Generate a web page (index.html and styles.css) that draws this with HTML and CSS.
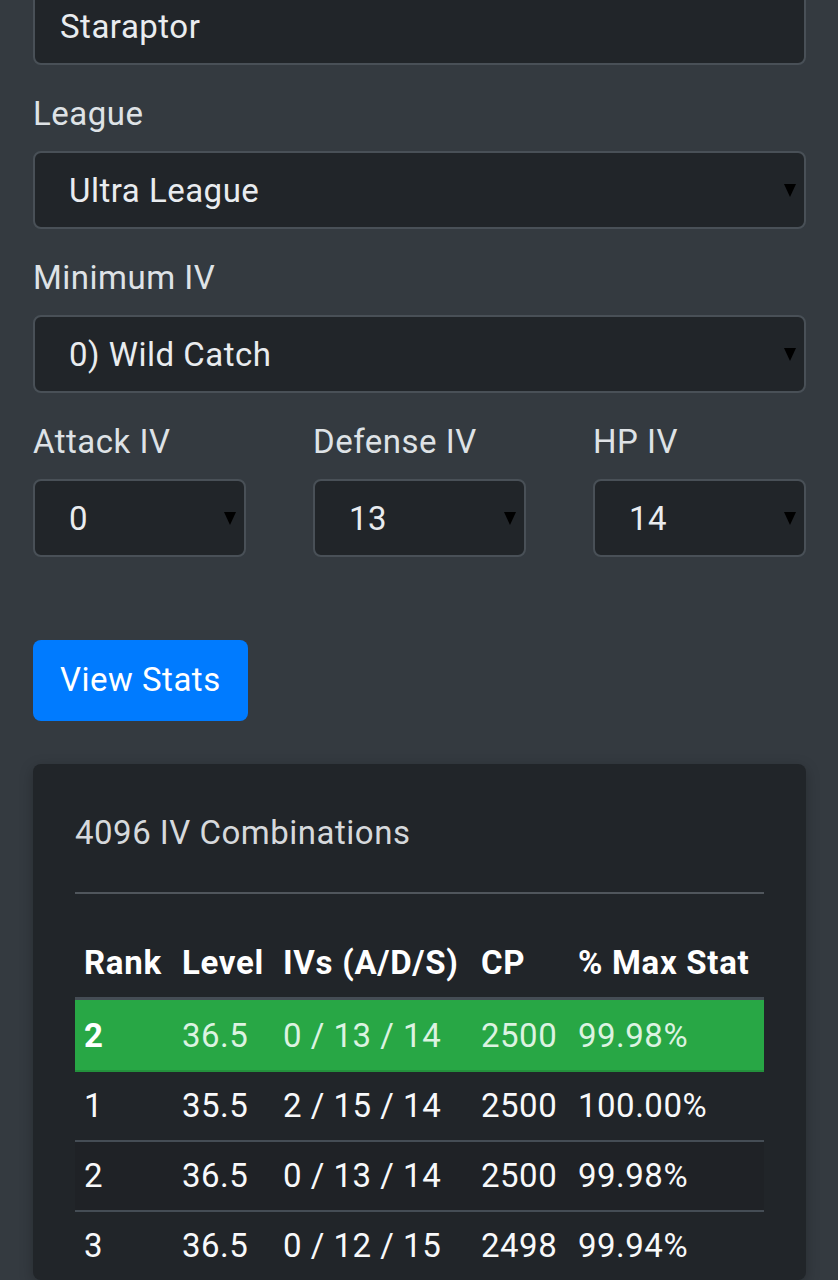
FILE: index.html
```html
<!DOCTYPE html>
<html lang="en">
<head>
  <meta charset="UTF-8">
  <title>IV Rank Checker</title>
  <link rel="stylesheet" href="styles.css">
</head>
<body>
  <div class="page">
    <form class="ivform" autocomplete="off">
      <div class="form-group">
        <input class="field name-input" name="pokemon" value="Staraptor">
      </div>

      <div class="form-group">
        <label for="league">League</label>
        <div class="select-wrap">
          <select id="league" class="field">
            <option>Great League</option>
            <option selected>Ultra League</option>
            <option>Master League</option>
          </select>
        </div>
      </div>

      <div class="form-group">
        <label for="minIv">Minimum IV</label>
        <div class="select-wrap">
          <select id="minIv" class="field">
            <option selected>0) Wild Catch</option>
            <option>1) Good Friend</option>
            <option>5) Weather Boost</option>
          </select>
        </div>
      </div>

      <div class="form-group iv-row">
        <div>
          <label for="atk">Attack IV</label>
          <div class="select-wrap">
            <select id="atk" class="field"><option selected>0</option><option>1</option></select>
          </div>
        </div>
        <div>
          <label for="def">Defense IV</label>
          <div class="select-wrap">
            <select id="def" class="field"><option selected>13</option><option>14</option></select>
          </div>
        </div>
        <div>
          <label for="hp">HP IV</label>
          <div class="select-wrap">
            <select id="hp" class="field"><option selected>14</option><option>15</option></select>
          </div>
        </div>
      </div>

      <button type="submit" class="btn">View Stats</button>
    </form>

    <div class="card">
      <h5 class="card-title">4096 IV Combinations</h5>
      <hr>
      <table class="ranks">
        <thead>
          <tr>
            <th class="c-rank">Rank</th>
            <th class="c-level">Level</th>
            <th class="c-ivs">IVs (A/D/S)</th>
            <th class="c-cp">CP</th>
            <th class="c-pct">% Max Stat</th>
          </tr>
        </thead>
        <tbody>
          <tr class="current">
            <th>2</th><td>36.5</td><td>0 / 13 / 14</td><td>2500</td><td>99.98%</td>
          </tr>
          <tr>
            <td>1</td><td>35.5</td><td>2 / 15 / 14</td><td>2500</td><td>100.00%</td>
          </tr>
          <tr>
            <td>2</td><td>36.5</td><td>0 / 13 / 14</td><td>2500</td><td>99.98%</td>
          </tr>
          <tr>
            <td>3</td><td>36.5</td><td>0 / 12 / 15</td><td>2498</td><td>99.94%</td>
          </tr>
        </tbody>
      </table>
    </div>
  </div>
</body>
</html>
```

FILE: styles.css
```css
body {
  margin: 0;
  background: #343a40;
  color: #dee2e6;
  font-family: Roboto, 'Noto Sans', sans-serif;
  font-size: 33px;
  letter-spacing: 0.5px;
  line-height: 48px;
  overflow: hidden;
}
.page {
  padding: 0 32px 40px 33px;
}
.ivform {
  margin-top: -13px;
}
.form-group {
  margin-bottom: 25px;
}
.form-group label {
  display: block;
  margin-bottom: 13px;
}
.field {
  display: block;
  width: 100%;
  height: 78px;
  box-sizing: border-box;
  background: #212529;
  border: 2px solid #495057;
  border-radius: 8px;
  color: #e9ecef;
  font-family: inherit;
  font-size: 33px;
  letter-spacing: 0.5px;
  outline: none;
}
.name-input {
  padding: 0 25px;
}
.select-wrap {
  position: relative;
}
.select-wrap select {
  appearance: none;
  -webkit-appearance: none;
  padding: 0 40px 0 34px;
}
.select-wrap::after {
  content: "";
  position: absolute;
  right: 10px;
  top: 50%;
  margin-top: -6px;
  border-left: 6px solid transparent;
  border-right: 6px solid transparent;
  border-top: 13px solid #000;
  pointer-events: none;
}
.iv-row {
  display: grid;
  grid-template-columns: repeat(3, 1fr);
  column-gap: 67px;
}
.btn {
  margin-top: 58px;
  padding: 16px 27px 17px;
  border: none;
  border-radius: 8px;
  background: #007bff;
  color: #fff;
  font-family: inherit;
  font-size: 33px;
  letter-spacing: 0.5px;
  line-height: 48px;
  cursor: pointer;
}
.card {
  margin-top: 43px;
  padding: 45px 42px 0;
  background: #212529;
  border-radius: 8px;
  box-shadow: 0 4px 14px rgba(0, 0, 0, 0.25);
}
.card-title {
  margin: 0;
  font-size: 33px;
  font-weight: 400;
  line-height: 48px;
  color: #d6d9dc;
}
.card hr {
  margin: 35px 0 35px;
  border: none;
  height: 2px;
  background: #50565c;
}
.ranks {
  width: 100%;
  border-collapse: collapse;
  table-layout: fixed;
  color: #f8f9fa;
}
.ranks th, .ranks td {
  padding: 10px 9px;
  text-align: left;
  white-space: nowrap;
}
.ranks thead th {
  font-weight: 700;
  letter-spacing: 0.7px;
  color: #fff;
  border-bottom: 3px solid #454d55;
}
.ranks tbody td, .ranks tbody th {
  border-top: 2px solid #454d55;
}
.ranks tbody tr:nth-child(3) {
  background: rgba(0, 0, 0, 0.06);
}
.ranks tr.current {
  background: #28a745;
  color: #dcf3e1;
}
.ranks tr.current th, .ranks tr.current td {
  border-top: none;
  padding-top: 12px;
}
.ranks tr.current th {
  font-weight: 700;
  color: #fff;
}
.ranks tr.current + tr td {
  border-top-color: #23913c;
}
.c-rank { width: 80px; }
.c-level { width: 83px; }
.c-ivs { width: 180px; }
.c-cp { width: 79px; }
```
